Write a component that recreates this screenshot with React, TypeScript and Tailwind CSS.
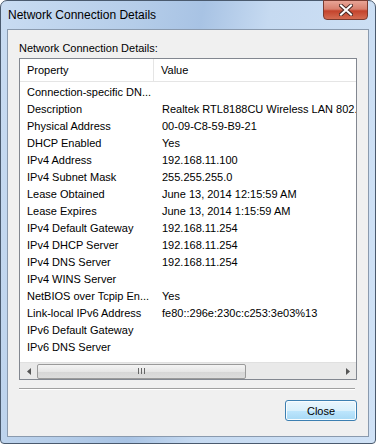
import React from "react";

const rows: [string, string][] = [
  ["Connection-specific DN...", ""],
  ["Description", "Realtek RTL8188CU Wireless LAN 802.11n USB 2.0 Network Adapter"],
  ["Physical Address", "00-09-C8-59-B9-21"],
  ["DHCP Enabled", "Yes"],
  ["IPv4 Address", "192.168.11.100"],
  ["IPv4 Subnet Mask", "255.255.255.0"],
  ["Lease Obtained", "June 13, 2014 12:15:59 AM"],
  ["Lease Expires", "June 13, 2014 1:15:59 AM"],
  ["IPv4 Default Gateway", "192.168.11.254"],
  ["IPv4 DHCP Server", "192.168.11.254"],
  ["IPv4 DNS Server", "192.168.11.254"],
  ["IPv4 WINS Server", ""],
  ["NetBIOS over Tcpip En...", "Yes"],
  ["Link-local IPv6 Address", "fe80::296e:230c:c253:3e03%13"],
  ["IPv6 Default Gateway", ""],
  ["IPv6 DNS Server", ""],
];

export default function App() {
  return (
    <div
      className="w-[376px] h-[444px] bg-white relative overflow-hidden"
      style={{ fontFamily: '"Liberation Sans", Arial, sans-serif' }}
    >
      <div className="absolute inset-0 rounded-t-[7px] rounded-b-[4px] border border-[#4a5a6e] bg-[linear-gradient(100deg,#c9dcf2_0%,#b5cde9_30%,#a8c3e4_45%,#c6daf1_60%,#d0e2f6_100%)] flex flex-col">
        <div className="h-[28px] flex items-start relative">
          <div className="pl-[7px] pt-[6px] text-[12px] leading-[16px] text-black">Network Connection Details</div>
          <div className="absolute right-[7px] top-[-1px] w-[45px] h-[20px] rounded-b-[4px] border border-[#7a3b30] bg-[linear-gradient(180deg,#e8a496_0%,#d8806e_45%,#c4432c_55%,#d46c52_100%)] flex items-center justify-center">
            <svg width="14" height="12" viewBox="0 0 14 12">
              <path d="M2 1.5 L12 10.5 M12 1.5 L2 10.5" stroke="#4a2a25" strokeWidth="4" strokeLinecap="square" />
              <path d="M2 1.5 L12 10.5 M12 1.5 L2 10.5" stroke="#ffffff" strokeWidth="2" strokeLinecap="square" />
            </svg>
          </div>
        </div>
        <div className="mx-[6px] mb-[6px] flex-1 border border-[#8a9aae] bg-[#f0f0f0] flex flex-col px-[11px] pt-[10px] text-[11px] text-black">
          <div className="leading-[16px] h-[17px]">Network Connection Details:</div>
          <div className="mt-[1px] h-[322px] border border-[#828790] bg-white flex flex-col">
            <div className="h-[23px] flex border-b border-[#e5e5e5] bg-white shrink-0">
              <div className="w-[134px] pl-[7px] flex items-center border-r border-[#e5e5e5]">Property</div>
              <div className="pl-[7px] flex items-center">Value</div>
            </div>
            <div className="flex-1 overflow-hidden pt-[2px]">
              {rows.map(([p, v]) => (
                <div key={p} className="h-[17px] flex items-center whitespace-nowrap">
                  <div className="w-[135px] pl-[7px] shrink-0 overflow-hidden">{p}</div>
                  <div className="pl-[7px]">{v}</div>
                </div>
              ))}
            </div>
            <div className="h-[17px] shrink-0 bg-[#e9e9e9] border-t border-[#e0e0e0] flex items-center">
              <div className="w-[17px] flex items-center justify-center">
                <svg width="4" height="7" viewBox="0 0 4 7"><path d="M4 0 L0 3.5 L4 7 Z" fill="#555" /></svg>
              </div>
              <div className="w-[209px] h-[15px] rounded-[2px] border border-[#9a9a9a] bg-[linear-gradient(180deg,#f4f4f4_0%,#e6e6e6_50%,#d6d6d6_51%,#dcdcdc_100%)] flex items-center justify-center">
                <svg width="7" height="6" viewBox="0 0 7 6"><path d="M0.5 0 V6 M3.5 0 V6 M6.5 0 V6" stroke="#666" strokeWidth="1" /></svg>
              </div>
              <div className="flex-1" />
              <div className="w-[17px] flex items-center justify-center">
                <svg width="4" height="7" viewBox="0 0 4 7"><path d="M0 0 L4 3.5 L0 7 Z" fill="#555" /></svg>
              </div>
            </div>
          </div>
          <div className="mt-[8px] h-[2px] border-t border-[#a0a0a0] border-b-white border-b mr-[2px]" />
          <div className="flex justify-end mt-[10px]">
            <button className="w-[72px] h-[21px] rounded-[3px] border border-[#3c7fb1] bg-[linear-gradient(180deg,#eaf6fd_0%,#d9f0fc_50%,#bee6fd_51%,#a7d9f5_100%)] shadow-[inset_0_0_0_1px_#f8fcfe] text-[11px] leading-[16px] text-black">
              Close
            </button>
          </div>
        </div>
      </div>
    </div>
  );
}
